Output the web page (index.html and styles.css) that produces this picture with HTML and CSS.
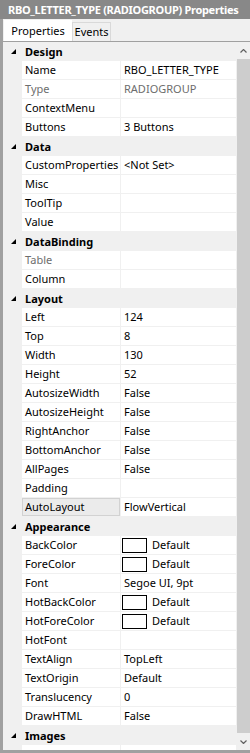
FILE: index.html
```html
<!DOCTYPE html>
<html lang="en">
<head>
    <meta charset="UTF-8">
    <title>RBO_LETTER_TYPE Properties</title>
    <link rel="stylesheet" href="styles.css">
</head>
<body>

<div class="panel">
    <div class="title">RBO_LETTER_TYPE (RADIOGROUP) Properties</div>

    <div class="frame">
        <div class="tabs">
            <span class="tab active">Properties</span>
            <span class="tab">Events</span>
        </div>

        <div class="body">
            <div class="grid">
                <div class="cat"><span class="arrow"></span>Design</div>
                <div class="row"><span class="name">Name</span><span class="value">RBO_LETTER_TYPE</span></div>
                <div class="row disabled"><span class="name">Type</span><span class="value">RADIOGROUP</span></div>
                <div class="row"><span class="name">ContextMenu</span><span class="value"></span></div>
                <div class="row"><span class="name">Buttons</span><span class="value">3 Buttons</span></div>

                <div class="cat"><span class="arrow"></span>Data</div>
                <div class="row"><span class="name">CustomProperties</span><span class="value">&lt;Not Set&gt;</span></div>
                <div class="row"><span class="name">Misc</span><span class="value"></span></div>
                <div class="row"><span class="name">ToolTip</span><span class="value"></span></div>
                <div class="row"><span class="name">Value</span><span class="value"></span></div>

                <div class="cat"><span class="arrow"></span>DataBinding</div>
                <div class="row disabled"><span class="name">Table</span><span class="value"></span></div>
                <div class="row"><span class="name">Column</span><span class="value"></span></div>

                <div class="cat"><span class="arrow"></span>Layout</div>
                <div class="row"><span class="name">Left</span><span class="value">124</span></div>
                <div class="row"><span class="name">Top</span><span class="value">8</span></div>
                <div class="row"><span class="name">Width</span><span class="value">130</span></div>
                <div class="row"><span class="name">Height</span><span class="value">52</span></div>
                <div class="row"><span class="name">AutosizeWidth</span><span class="value">False</span></div>
                <div class="row"><span class="name">AutosizeHeight</span><span class="value">False</span></div>
                <div class="row"><span class="name">RightAnchor</span><span class="value">False</span></div>
                <div class="row"><span class="name">BottomAnchor</span><span class="value">False</span></div>
                <div class="row"><span class="name">AllPages</span><span class="value">False</span></div>
                <div class="row"><span class="name">Padding</span><span class="value"></span></div>
                <div class="row selected"><span class="name">AutoLayout</span><span class="value">FlowVertical</span></div>

                <div class="cat"><span class="arrow"></span>Appearance</div>
                <div class="row"><span class="name">BackColor</span><span class="value"><i class="swatch"></i>Default</span></div>
                <div class="row"><span class="name">ForeColor</span><span class="value"><i class="swatch"></i>Default</span></div>
                <div class="row"><span class="name">Font</span><span class="value">Segoe UI, 9pt</span></div>
                <div class="row"><span class="name">HotBackColor</span><span class="value"><i class="swatch"></i>Default</span></div>
                <div class="row"><span class="name">HotForeColor</span><span class="value"><i class="swatch"></i>Default</span></div>
                <div class="row"><span class="name">HotFont</span><span class="value"></span></div>
                <div class="row"><span class="name">TextAlign</span><span class="value">TopLeft</span></div>
                <div class="row"><span class="name">TextOrigin</span><span class="value">Default</span></div>
                <div class="row"><span class="name">Translucency</span><span class="value">0</span></div>
                <div class="row"><span class="name">DrawHTML</span><span class="value">False</span></div>

                <div class="cat"><span class="arrow"></span>Images</div>
                <div class="row"><span class="name"></span><span class="value"></span></div>
            </div>

            <!-- scrollbar -->
            <div class="scrollbar">
                <span class="sb-btn">
                    <svg width="7" height="4" viewBox="0 0 7 4"><polyline points="0.5,3.5 3.5,0.5 6.5,3.5" fill="none" stroke="#606060" stroke-width="1.2"/></svg>
                </span>
                <span class="thumb"></span>
                <span class="sb-btn">
                    <svg width="7" height="4" viewBox="0 0 7 4"><polyline points="0.5,0.5 3.5,3.5 6.5,0.5" fill="none" stroke="#606060" stroke-width="1.2"/></svg>
                </span>
            </div>
        </div>
    </div>
</div>

</body>
</html>
```

FILE: styles.css
```css
body {
    margin: 0;
    padding: 0;
    width: 250px;
    height: 753px;
    overflow: hidden;
    font-family: "Noto Sans", "Open Sans", sans-serif;
    font-size: 11px;
    color: #000;
    background-color: #f0f0f0;
}
.panel {
    display: flex;
    flex-direction: column;
    height: 753px;
}
.title {
    height: 19px;
    line-height: 19px;
    padding-left: 8px;
    background-color: #888888;
    color: #fff;
    font-weight: bold;
    letter-spacing: -0.3px;
    white-space: nowrap;
    overflow: hidden;
}
.frame {
    flex: 1;
    min-height: 0;
    display: flex;
    flex-direction: column;
    border-left: 3px solid #a0a0a0;
    border-bottom: 3px solid #a0a0a0;
}
.tabs {
    height: 22px;
    display: flex;
    align-items: flex-end;
    padding-left: 1px;
    background-color: #f0f0f0;
}
.tab {
    box-sizing: border-box;
    height: 19px;
    line-height: 17px;
    text-align: center;
    border: 1px solid #d9d9d9;
    border-bottom: none;
    background-color: #f0f0f0;
    width: 39px;
}
.tab.active {
    height: 21px;
    line-height: 20px;
    width: 68px;
    background-color: #fff;
    border-color: #fff;
}
.body {
    flex: 1;
    min-height: 0;
    display: flex;
    border-top: 1px solid #a0a0a0;
}
.grid {
    flex: 1;
    overflow: hidden;
    background-color: #f0f0f0;
}
.cat {
    height: 19px;
    line-height: 19px;
    padding-left: 22px;
    position: relative;
    font-weight: bold;
}
.arrow {
    position: absolute;
    left: 8px;
    top: 7px;
    width: 0;
    height: 0;
    border-left: 5px solid transparent;
    border-bottom: 5px solid #000;
}
.row {
    display: grid;
    grid-template-columns: 98px 1fr;
    column-gap: 1px;
    height: 19px;
    box-sizing: border-box;
    padding: 0 1px 1px 19px;
}
.name, .value {
    display: flex;
    align-items: center;
    padding-left: 3px;
    line-height: 18px;
    background-color: #fff;
    white-space: nowrap;
    overflow: hidden;
}
.disabled .name, .disabled .value {
    color: #6d6d6d;
}
.selected .name {
    box-sizing: border-box;
    padding-left: 2px;
    background-color: #ebebeb;
    border: 1px solid #d2d2d2;
}
.swatch {
    box-sizing: border-box;
    width: 25px;
    height: 15px;
    margin: 0 5px 0 -2px;
    border: 1px solid #000;
    background-color: #fff;
}
.scrollbar {
    width: 13px;
    display: flex;
    flex-direction: column;
    background-color: #f0f0f0;
}
.sb-btn {
    height: 17px;
    display: flex;
    justify-content: center;
    align-items: center;
}
.thumb {
    flex: 1;
    background-color: #cdcdcd;
}
```
